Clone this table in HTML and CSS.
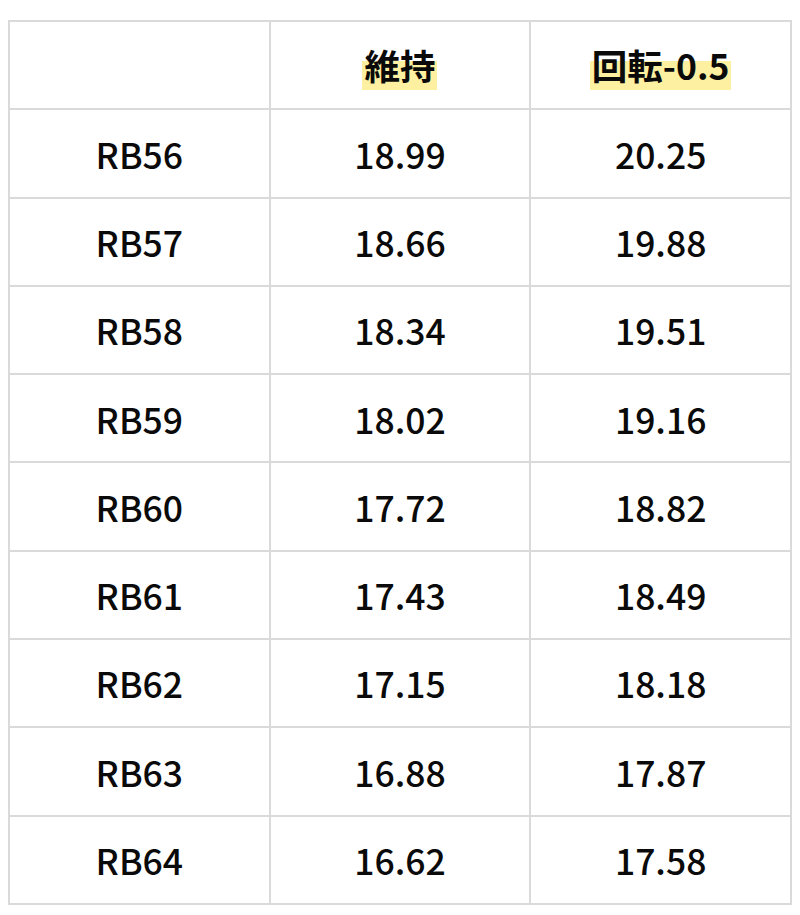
FILE: index.html
```html
<!DOCTYPE html>
<html lang="ja">
<head>
<meta charset="utf-8">
<link rel="stylesheet" href="styles.css">
</head>
<body>
<table class="grid">
  <thead>
    <tr><th></th><th><span class="mark">維持</span></th><th><span class="mark">回転-0.5</span></th></tr>
  </thead>
  <tbody>
    <tr><td>RB56</td><td>18.99</td><td>20.25</td></tr>
    <tr><td>RB57</td><td>18.66</td><td>19.88</td></tr>
    <tr><td>RB58</td><td>18.34</td><td>19.51</td></tr>
    <tr><td>RB59</td><td>18.02</td><td>19.16</td></tr>
    <tr><td>RB60</td><td>17.72</td><td>18.82</td></tr>
    <tr><td>RB61</td><td>17.43</td><td>18.49</td></tr>
    <tr><td>RB62</td><td>17.15</td><td>18.18</td></tr>
    <tr><td>RB63</td><td>16.88</td><td>17.87</td></tr>
    <tr><td>RB64</td><td>16.62</td><td>17.58</td></tr>
  </tbody>
</table>
</body>
</html>
```

FILE: styles.css
```css
html, body {
  background: #ffffff;
}
body {
  margin: 8px;
  font-family: "Noto Sans CJK JP", "Noto Sans", sans-serif;
  color: #0a0a0a;
}
.grid {
  margin-top: 12px;
  width: 784px;
  border-collapse: collapse;
  table-layout: fixed;
}
.grid th,
.grid td {
  border: 2px solid #dadada;
  height: 86.3px;
  padding: 0;
  text-align: center;
  vertical-align: middle;
  font-size: 35.5px;
  line-height: 1;
}
.grid td {
  font-weight: 500;
}
.grid th {
  font-weight: 700;
}
.mark {
  background: linear-gradient(to bottom, transparent 46%, #fdf0a0 46%);
  padding: 2px 2px 0;
}
```
